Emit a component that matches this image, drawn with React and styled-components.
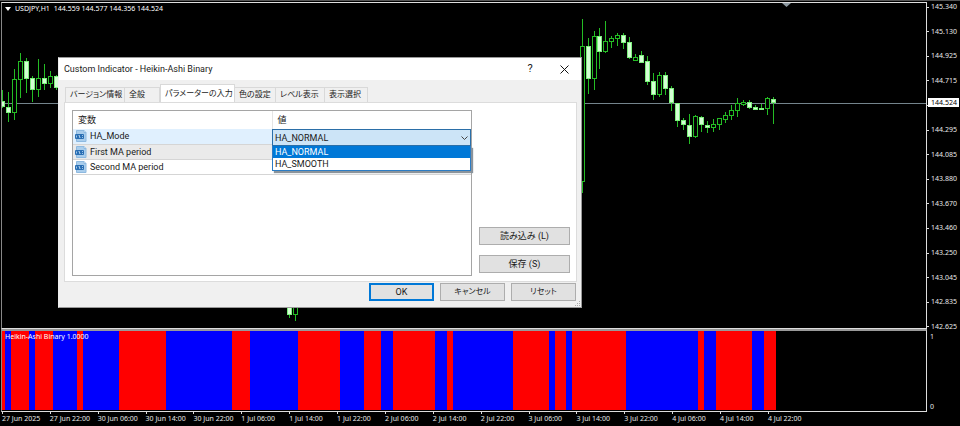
import React, { useState } from 'react'
import styled, { createGlobalStyle } from 'styled-components'

const prices = ['145.340', '145.130', '144.925', '144.715', '144.505', '144.295', '144.085', '143.880', '143.670', '143.460', '143.250', '143.045', '142.835', '142.625']

const times = ['27 Jun 2025', '27 Jun 22:00', '30 Jun 06:00', '30 Jun 14:00', '30 Jun 22:00', '1 Jul 06:00', '1 Jul 14:00', '1 Jul 22:00', '2 Jul 06:00', '2 Jul 14:00', '2 Jul 22:00', '3 Jul 06:00', '3 Jul 14:00', '3 Jul 22:00', '4 Jul 06:00', '4 Jul 14:00', '4 Jul 22:00']

// x, high, body top, body bottom, low, bearish
const candles = [
    [2, 90, 101, 107, 108, 1],
    [8, 92, 107, 113, 122, 1],
    [14, 69, 79, 113, 120, 0],
    [20, 53, 61, 80, 98, 0],
    [26, 58, 61, 79, 93, 1],
    [32, 76, 78, 90, 102, 1],
    [38, 59, 78, 90, 97, 0],
    [44, 64, 78, 84, 90, 1],
    [50, 71, 76, 84, 88, 0],
    [56, 75, 76, 88, 90, 1],
    [289, 290, 295, 315, 318, 1],
    [295, 290, 295, 315, 321, 0],
    [582, 19, 46, 182, 193, 0],
    [588, 38, 46, 79, 94, 1],
    [594, 31, 36, 79, 90, 0],
    [599, 28, 36, 52, 69, 1],
    [605, 21, 41, 52, 53, 0],
    [611, 36, 38, 42, 48, 0],
    [617, 33, 35, 39, 46, 0],
    [623, 33, 35, 43, 49, 1],
    [629, 37, 42, 58, 59, 1],
    [635, 54, 57, 61, 61, 0],
    [641, 51, 55, 63, 63, 1],
    [647, 56, 61, 82, 85, 1],
    [653, 73, 81, 95, 100, 1],
    [659, 72, 75, 95, 97, 0],
    [665, 72, 75, 89, 95, 1],
    [671, 86, 88, 103, 111, 1],
    [677, 103, 103, 121, 127, 1],
    [683, 118, 120, 125, 130, 1],
    [689, 114, 125, 137, 144, 1],
    [695, 115, 116, 137, 138, 0],
    [701, 116, 117, 125, 132, 1],
    [707, 121, 125, 128, 133, 1],
    [713, 119, 124, 128, 132, 0],
    [719, 118, 118, 125, 130, 0],
    [725, 112, 115, 120, 123, 0],
    [731, 105, 110, 116, 120, 0],
    [737, 98, 103, 111, 117, 0],
    [743, 100, 102, 105, 106, 0],
    [749, 100, 102, 108, 109, 1],
    [755, 105, 107, 110, 110, 1],
    [761, 104, 108, 110, 110, 1],
    [767, 97, 98, 109, 115, 0],
    [773, 97, 99, 103, 124, 1],
]

// right edge of every run, red first and then alternating
const runs = [5, 11, 29, 35, 53, 77, 83, 119, 166, 232, 250, 298, 340, 364, 381, 393, 435, 447, 453, 513, 549, 555, 566, 572, 626, 698, 704, 716, 752, 764, 776]

const params = ['HA_Mode', 'First MA period', 'Second MA period']
const modes = ['HA_NORMAL', 'HA_SMOOTH']
const tabs = [
    { label: 'バージョン情報', width: 60 },
    { label: '全般', width: 35 },
    { label: 'パラメーターの入力', width: 75 },
    { label: '色の設定', width: 41 },
    { label: 'レベル表示', width: 49 },
    { label: '表示選択', width: 43 },
]

function Candle({ data }) {
    const [x, high, top, bottom, low, bearish] = data
    return (<g>
        <rect x={x} y={high} width='1' height={low - high} fill='#24bc24' />
        <rect
            x={x - 1.5}
            y={top + 0.5}
            width='4'
            height={Math.max(bottom - top - 1, 1)}
            fill={bearish ? '#d4ffd4' : '#000'}
            stroke={bearish ? '#7df07d' : '#24bc24'}
        />
    </g>)
}

function PriceChart() {
    return (<ChartSvg viewBox='2 3 924 325' preserveAspectRatio='none' aria-hidden='true'>
        <path d='M2 103.5H926' stroke='#74848c' />
        {candles.map((c) => <Candle key={c[0]} data={c} />)}
        <path d='M782 3h9l-4.500 4z' fill='#8c98a0' />
    </ChartSvg>)
}

function BinaryChart() {
    return (<ChartSvg viewBox='2 331 924 80' preserveAspectRatio='none' aria-hidden='true'>
        {runs.map((end, i) => {
            const start = i ? runs[i - 1] : 2
            return <rect key={end} x={start} y='331' width={end - start} height='79' fill={i % 2 ? '#00f' : '#f00'} />
        })}
    </ChartSvg>)
}

function ParamIcon() {
    return (<svg width='12' height='12' viewBox='0 0 12 12' aria-hidden='true'>
        <path d='M1.500.500h7.500l2 2v9h-9.500z' fill='#a9cdec' stroke='#8db9e0' />
        <path d='M9 .500v2h2' fill='#e8f3fc' stroke='#8db9e0' />
        <rect x='0' y='4' width='9' height='5' rx='1' fill='#2a6fb4' />
        <path d='M1.500 5.500v2M3.500 5.500h1v2h1M7 5.500h1M7 7.500h1' fill='none' stroke='#c4def4' strokeWidth='.8' />
    </svg>)
}

function Dialog() {
    const [mode, setMode] = useState(modes[0])
    const [tab, setTab] = useState(2)

    return (<Window role='dialog' aria-labelledby='dialog-title'>
        <TitleBar>
            <Title id='dialog-title'>Custom Indicator - Heikin-Ashi Binary</Title>
            <TitleButton aria-label='Help'>?</TitleButton>
            <TitleButton aria-label='Close'>
                <svg width='9' height='9' viewBox='0 0 9 9'><path d='M.500.500l8 8M8.500.500l-8 8' stroke='#111' /></svg>
            </TitleButton>
        </TitleBar>
        <TabList role='tablist'>
            {tabs.map((t, i) => <Tab
                key={t.label}
                role='tab'
                aria-selected={tab === i}
                $active={tab === i}
                $width={t.width}
                onClick={() => setTab(i)}
            >{t.label}</Tab>)}
        </TabList>
        <Panel role='tabpanel'>
            <TableFrame>
                <ParamTable>
                    <thead>
                        <tr><th>変数</th><th>値</th></tr>
                    </thead>
                    <tbody>
                        {params.map((name, i) => <ParamRow key={name} $tone={['#e0f0fe', '#eaeaea', '#fff'][i]}>
                            <td><ParamName htmlFor={i === 0 ? 'mode' : undefined}><ParamIcon />{name}</ParamName></td>
                            <td>{i === 0 && <SelectWrap>
                                <ModeSelect id='mode' value={mode} onChange={(e) => setMode(e.target.value)}>
                                    {modes.map((m) => <option key={m}>{m}</option>)}
                                </ModeSelect>
                                <Chevron width='7' height='4' viewBox='0 0 7 4' aria-hidden='true'>
                                    <path d='M.500.500l3 3 3-3' fill='none' stroke='#444' />
                                </Chevron>
                                <Options role='listbox' aria-label='HA_Mode'>
                                    {modes.map((m) => <Option
                                        key={m}
                                        role='option'
                                        aria-selected={m === mode}
                                        $active={m === mode}
                                        onClick={() => setMode(m)}
                                    >{m}</Option>)}
                                </Options>
                            </SelectWrap>}</td>
                        </ParamRow>)}
                    </tbody>
                </ParamTable>
            </TableFrame>
            <SideButtons>
                <Button>読み込み (L)</Button>
                <Button>保存 (S)</Button>
            </SideButtons>
        </Panel>
        <Footer>
            <Button $primary>OK</Button>
            <Button $kana>キャンセル</Button>
            <Button $kana>リセット</Button>
            <Grip width='6' height='6' viewBox='0 0 6 6' aria-hidden='true'>
                <path d='M4 0h1v1h-1zM2 2h1v1h-1zM4 2h1v1h-1zM0 4h1v1h-1zM2 4h1v1h-1zM4 4h1v1h-1z' fill='#aaa' />
            </Grip>
        </Footer>
    </Window>)
}

function App() {
    return (<Terminal>
        <GlobalStyle />
        <PricePane>
            <PriceChart />
            <Caption>
                <svg width='6' height='4' viewBox='0 0 6 4' aria-hidden='true'><path d='M0 0h6L3 4z' fill='#fff' /></svg>
                <span>USDJPY,H1</span>
                <span>144.559 144.577 144.356 144.524</span>
            </Caption>
        </PricePane>
        <PriceScale>
            {prices.map((p) => <ScaleMark key={p}>{p === '144.505' ? '' : p}</ScaleMark>)}
            <CurrentPrice>144.524</CurrentPrice>
        </PriceScale>
        <BinaryPane>
            <BinaryChart />
            <Caption>Heikin-Ashi Binary 1.0000</Caption>
        </BinaryPane>
        <BinaryScale><span>1</span><span>0</span></BinaryScale>
        <TimeScale>
            {times.map((t) => <TimeMark key={t}>{t}</TimeMark>)}
        </TimeScale>
        <Dialog />
    </Terminal>)
}

export default App

const GlobalStyle = createGlobalStyle`
    * {
        box-sizing: border-box;
    }
    body {
        margin: 0;
        background-color: #000;
    }
    button, select {
        font: inherit;
        color: inherit;
        padding: 0;
    }
`
const Terminal = styled.main`
    position: relative;
    display: grid;
    grid-template-columns: 1fr 33px;
    grid-template-rows: 328px 83px 14px;
    min-height: 100vh;
    align-content: start;
    overflow: hidden;
    border-top: 1px solid #555;
    background-color: #000;
    color: #e8e8e8;
    font: 7px/10px 'Noto Sans', 'DejaVu Sans', sans-serif;
`
const PricePane = styled.section`
    position: relative;
    margin-top: 1px;
    margin-left: 1px;
    border: 1px solid #ddd;
    border-left-color: #888;
`
const BinaryPane = styled.section`
    position: relative;
    margin-left: 1px;
    border: 1px solid #ddd;
    border-top: 2px solid #999;
    border-left-color: #888;
`
const ChartSvg = styled.svg`
    display: block;
    width: 100%;
    height: 100%;
`
const Caption = styled.div`
    position: absolute;
    top: 1px;
    left: 3px;
    display: flex;
    align-items: center;
    gap: 4px;
    color: #fff;
    white-space: nowrap;
`
const PriceScale = styled.div`
    position: relative;
    display: flex;
    flex-direction: column;
    justify-content: space-between;
    padding-top: 1px;
    margin-bottom: -3px;
`
const ScaleMark = styled.div`
    display: flex;
    align-items: center;
    gap: 2px;
    height: 10px;

    &::before {
        content: '';
        width: 2px;
        height: 1px;
        background-color: #ddd;
    }
`
const CurrentPrice = styled.div`
    position: absolute;
    top: 97px;
    left: 1px;
    right: 1px;
    padding-left: 3px;
    background-color: #fff;
    color: #000;
    line-height: 9px;
`
const BinaryScale = styled.div`
    display: flex;
    flex-direction: column;
    justify-content: space-between;
    padding: 3px 0 0 3px;
`
const TimeScale = styled.div`
    display: grid;
    grid-template-columns: repeat(17, 1fr);
    margin-left: 2px;
    padding-right: 12%;
`
const TimeMark = styled.div`
    white-space: nowrap;

    &::before {
        content: '';
        display: block;
        width: 1px;
        height: 2px;
        background-color: #ddd;
    }
`
const Window = styled.section`
    position: absolute;
    top: 56px;
    left: 58px;
    width: 524px;
    border: 1px solid #999;
    border-left-color: #eee;
    background-color: #f0f0f0;
    color: #1a1a1a;
    font: 9px/12px Roboto, 'Noto Sans CJK JP', sans-serif;
    font-feature-settings: 'palt';
`
const TitleBar = styled.header`
    display: flex;
    align-items: center;
    height: 22px;
    padding-left: 5px;
    background-color: #fff;
`
const Title = styled.h1`
    flex: 1;
    margin: 0;
    font: inherit;
`
const TitleButton = styled.button`
    display: flex;
    align-items: center;
    justify-content: center;
    width: 34px;
    height: 22px;
    border: none;
    background-color: transparent;
    font-size: 11px;
`
const TabList = styled.div`
    display: flex;
    align-items: flex-end;
    height: 22px;
    padding-left: 6px;
`
const Tab = styled.button`
    width: ${(props) => props.$width}px;
    height: ${(props) => (props.$active ? '18px' : '15px')};
    padding-left: 4px;
    border: 1px solid #d9d9d9;
    border-left-width: ${(props) => (props.$active ? '1px' : '0')};
    border-bottom: none;
    background-color: ${(props) => (props.$active ? '#fff' : '#f0f0f0')};
    font-size: 8px;
    text-align: left;
    white-space: nowrap;

    &:first-child {
        border-left-width: 1px;
    }
`
const Panel = styled.div`
    display: flex;
    gap: 7px;
    margin: 0 4px 0 5px;
    padding: 7px 6px 5px 7px;
    border: 1px solid #dcdcdc;
    background-color: #fff;
`
const TableFrame = styled.div`
    flex: 1;
    min-height: 166px;
    border: 1px solid #a5a5a5;
`
const ParamTable = styled.table`
    width: 100%;
    table-layout: fixed;
    border-collapse: collapse;

    th {
        height: 18px;
        padding: 0 5px;
        font-weight: 400;
        text-align: left;
    }
    th + th {
        border-left: 1px solid #e5e5e5;
    }
    td {
        height: 15px;
        padding: 0;
        border-bottom: 1px solid #d5d5d5;
    }
`
const ParamRow = styled.tr`
    background-color: ${(props) => props.$tone};
`
const ParamName = styled.label`
    display: flex;
    align-items: center;
    gap: 3px;
    padding-left: 2px;
`
const SelectWrap = styled.div`
    position: relative;
    height: 14px;
`
const ModeSelect = styled.select`
    display: block;
    width: 100%;
    height: 17px;
    padding-left: 2px;
    border: 1px solid #2b6fa8;
    border-radius: 0;
    background-color: #cce4f7;
    appearance: none;
`
const Chevron = styled.svg`
    position: absolute;
    top: 7px;
    right: 3px;
    pointer-events: none;
`
const Options = styled.ul`
    position: absolute;
    top: 17px;
    left: 0;
    right: 0;
    margin: 0;
    padding: 0;
    border: 1px solid #2b7cc4;
    border-top: none;
    background-color: #fff;
    box-shadow: 2px 2px 1px #8a939b;
    list-style: none;
`
const Option = styled.li`
    padding-left: 2px;
    background-color: ${(props) => (props.$active ? '#0078d7' : '#fff')};
    color: ${(props) => (props.$active ? '#fff' : '#1a1a1a')};
    line-height: 12px;
`
const Button = styled.button`
    width: 65px;
    height: 18px;
    border: ${(props) => (props.$primary ? '2px solid #0078d7' : '1px solid #adadad')};
    background-color: #e1e1e1;
    font-size: ${(props) => (props.$kana ? '8px' : '9px')};
`
const SideButtons = styled.div`
    display: flex;
    flex-direction: column;
    justify-content: flex-end;
    gap: 10px;
    padding-bottom: 3px;

    ${Button} {
        width: 91px;
    }
`
const Footer = styled.footer`
    position: relative;
    display: flex;
    justify-content: flex-end;
    gap: 6px;
    padding: 1px 5px 6px;
`
const Grip = styled.svg`
    position: absolute;
    right: 0;
    bottom: 0;
`
